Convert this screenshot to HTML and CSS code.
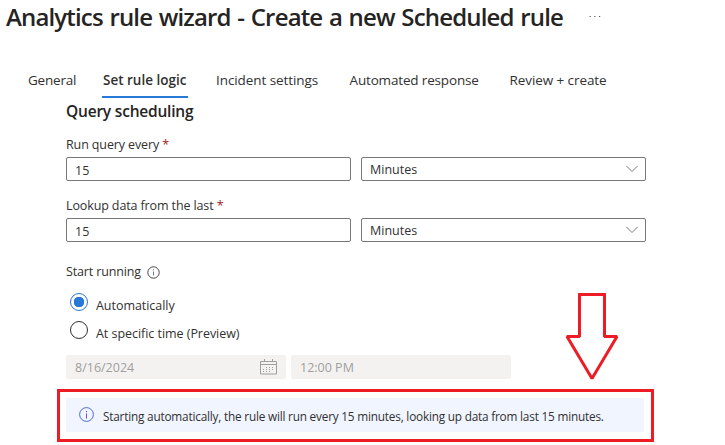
FILE: index.html
```html
<!DOCTYPE html>
<html lang="en">
<head>
<meta charset="utf-8">
<title>Analytics rule wizard</title>
<link rel="stylesheet" href="styles.css">
</head>
<body>
<header class="page-header">
  <h1 class="title">Analytics rule wizard - Create a new Scheduled rule</h1>
  <svg class="more" width="12" height="4" viewBox="0 0 12 4"><path d="M.5 1.500h1.300M5.200 1.500h1.300M9.900 1.500h1.300" stroke="#605e5c" stroke-width="1.200"/></svg>
</header>
<nav class="tabs">
  <a class="tab tight">General</a>
  <a class="tab active">Set rule logic</a>
  <a class="tab">Incident settings</a>
  <a class="tab tab-response">Automated response</a>
  <a class="tab">Review + create</a>
</nav>
<main class="content">
  <h2 class="section-title">Query scheduling</h2>
  <section class="field">
    <div class="label">Run query every <span class="required">*</span></div>
    <div class="row">
      <div class="input">15</div>
      <div class="select"><span>Minutes</span><svg width="12" height="8" viewBox="0 0 12 8"><path d="M.5 1l5.500 5.500L11.500 1" fill="none" stroke="#797775"/></svg></div>
    </div>
  </section>
  <section class="field">
    <div class="label">Lookup data from the last <span class="required">*</span></div>
    <div class="row">
      <div class="input">15</div>
      <div class="select"><span>Minutes</span><svg width="12" height="8" viewBox="0 0 12 8"><path d="M.5 1l5.500 5.500L11.500 1" fill="none" stroke="#797775"/></svg></div>
    </div>
  </section>
  <section class="start">
    <div class="start-label"><span>Start running</span><svg width="13" height="13" viewBox="0 0 13 13"><circle cx="6.500" cy="6.500" r="5.700" fill="none" stroke="#484644"/><path d="M6.500 5.500v4M6.500 3.200v1.200" stroke="#6a7f94"/></svg></div>
    <div class="radio"><i class="dot checked"></i><span>Automatically</span></div>
    <div class="radio"><i class="dot"></i><span>At specific time (Preview)</span></div>
    <div class="datetime">
      <div class="disabled"><span>8/16/2024</span><svg width="17" height="16" viewBox="0 0 17 16"><path d="M.5 2.500h16v12.500H.5zM.5 5.500h16M4.500 0v3M12.500 0v3" fill="none" stroke="#a19f9d"/><path d="M6 8.500h8M3 10.500h11M3 12.500h8" stroke="#a19f9d" stroke-dasharray="1 2"/></svg></div>
      <div class="disabled"><span>12:00 PM</span></div>
    </div>
  </section>
  <div class="callout">
    <div class="info"><svg width="15" height="15" viewBox="0 0 15 15"><circle cx="7.500" cy="7.500" r="6.900" fill="none" stroke="#4f6bd6"/><path d="M7.500 6.500v5M7.500 4v1.300" stroke="#6b4fd0"/></svg><span class="info-text">Starting automatically, the rule will run every 15 minutes, looking up data from last 15 minutes.</span></div>
  </div>
</main>
<svg class="arrow" width="54" height="90" viewBox="0 0 54 90"><path d="M14.500 2.500h25v42h12.500L27 86.500 2 44.500h12.500z" fill="none" stroke="#ed1c24" stroke-width="3" stroke-linejoin="bevel"/><path d="M13 4V1h28v3z" fill="#ed1c24"/></svg>
</body>
</html>
```

FILE: styles.css
```css
* { box-sizing: border-box; }
body { margin: 0; height: 445px; overflow: hidden; position: relative; background: #fff; color: #323130; font: 12.500px/18px "Open Sans", "Noto Sans", sans-serif; }
.page-header { display: flex; height: 64px; padding: 0 0 0 6px; }
.title { margin: 0; font-size: 24px; line-height: 34px; font-weight: 600; color: #252423; letter-spacing: -.84px; word-spacing: 1.200px; white-space: nowrap; }
.more { margin: 15px 0 0 26px; }
.tabs { display: grid; grid-template-columns: 74px 114px 133.500px 160px 110px; height: 34px; padding-left: 28px; font-size: 13.500px; line-height: 32px; letter-spacing: -.08px; white-space: nowrap; }
.tight { letter-spacing: -.2px; }
.tab-response { letter-spacing: -.16px; }
.active { width: 86px; padding-left: 1px; font-weight: 600; letter-spacing: 0; border-bottom: 2px solid #2878d8; }
.content { padding-left: 66px; white-space: nowrap; }
.section-title { margin: 0; font-size: 15.500px; line-height: 26px; height: 37px; font-weight: 600; letter-spacing: -.2px; color: #252423; }
.field { height: 61px; }
.label { height: 22px; line-height: 19px; letter-spacing: -.12px; }
.required { color: #a4262c; }
.row { display: flex; gap: 10px; }
.input, .select { width: 285px; height: 24px; border: 1px solid #7a7876; border-radius: 2px; padding: 0 8px; line-height: 24px; }
.input { padding-top: 1px; }
.select { display: flex; align-items: center; justify-content: space-between; padding-right: 7px; }
.select span, .disabled span { padding-top: 2px; }
.start-label { display: flex; align-items: center; gap: 6px; height: 30px; margin-bottom: 6px; letter-spacing: -.15px; }
.radio { display: flex; gap: 8px; height: 28px; padding-left: 4px; letter-spacing: -.04px; }
.radio span { padding-top: 4px; }
.dot { width: 18px; height: 18px; border: 1px solid #323130; border-radius: 50%; }
.checked { border-color: #2878d8; background: radial-gradient(circle, #2878d8 5px, #fff 5.500px); }
.datetime { display: flex; gap: 5px; margin-top: 6px; }
.disabled { width: 220px; height: 24px; background: #f3f2f1; color: #a19f9d; border-radius: 2px; padding: 0 9px; display: flex; justify-content: space-between; align-items: center; }
.callout { width: 597px; height: 53px; margin: 10px 0 0 -9px; border: 3px solid #ed1c24; padding: 6px; }
.info { display: flex; align-items: center; width: 578px; height: 34px; background: #f0f5ff; padding-left: 13px; gap: 9px; }
.info svg { flex: none; margin-top: -1px; }
.info-text { font-size: 11.800px; letter-spacing: -.205px; padding-top: 1px; }
.arrow { position: absolute; left: 565px; top: 292px; }
```
